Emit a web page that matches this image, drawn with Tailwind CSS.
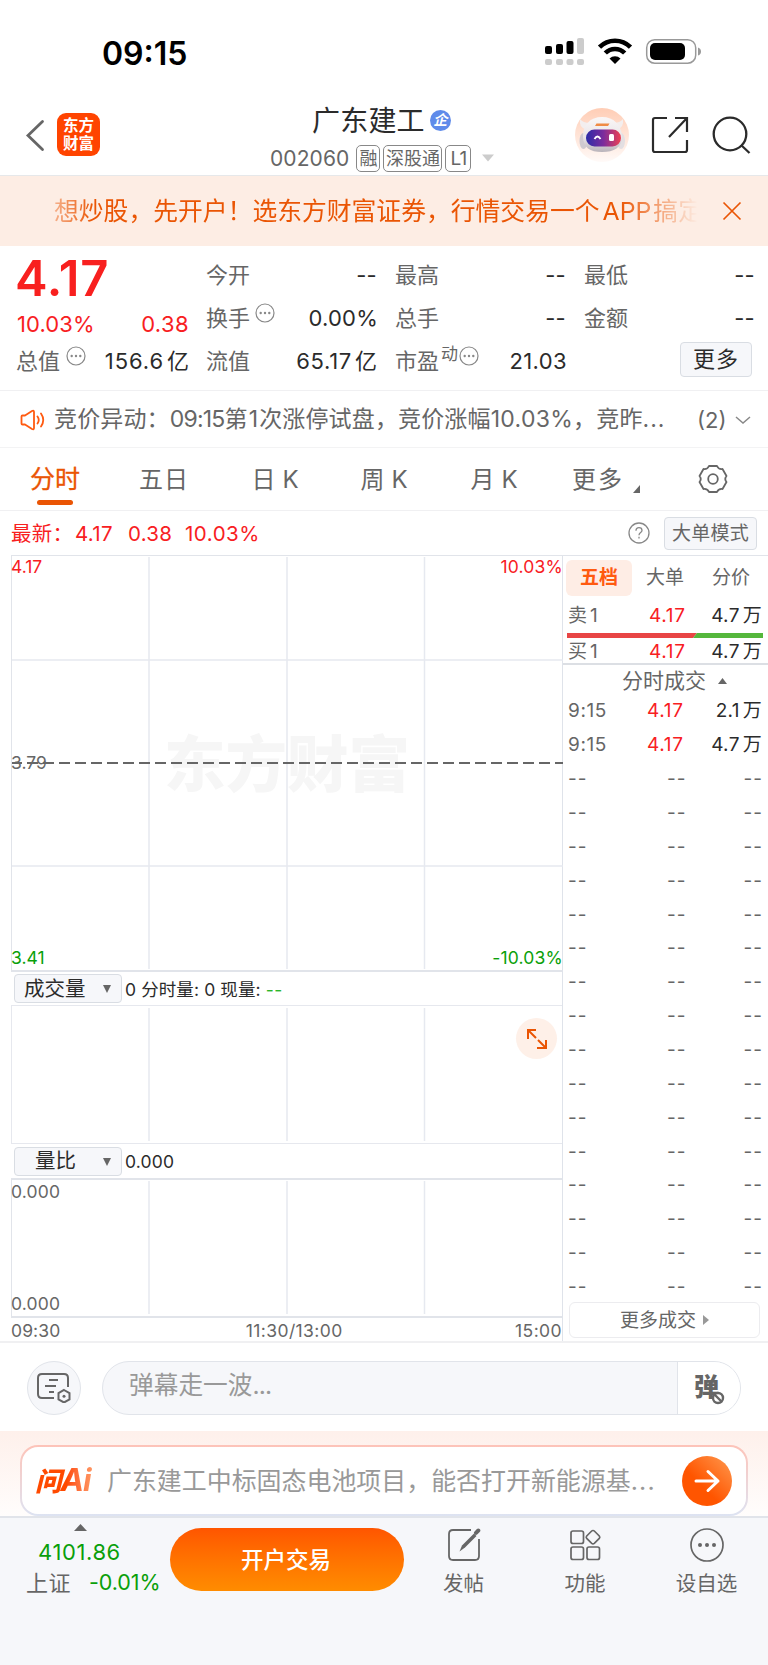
<!DOCTYPE html>
<html lang="zh-CN">
<head>
    <meta charset="UTF-8">
    <meta name="viewport" content="width=device-width, initial-scale=1.0">
    <title>广东建工 002060</title>
    <script src="https://cdn.jsdelivr.net/npm/@tailwindcss/browser@4"></script>
</head>
<body class="w-[768px] h-[1665px] overflow-hidden bg-white text-[#666] font-['Inter','Noto_Sans_CJK_SC',sans-serif] leading-none whitespace-nowrap">

    <!-- Status bar -->
    <div class="h-[98px] flex items-start justify-between pl-[102px] pr-[67px] pt-[37px] text-black">
        <span class="text-[32px] leading-[33px] font-semibold tracking-[0px]">09:15</span>
        <div class="flex items-start">
            <svg class="w-10 h-7 mr-3 ml-[1px]" viewBox="0 0 40 28">
                <g fill="#000"><rect x="0" y="9" width="7" height="8" rx="2"/><rect x="11" y="7" width="7" height="10" rx="2"/><rect x="21.500" y="4" width="7" height="13" rx="2"/></g>
                <g fill="#ccc"><rect x="32" y="1" width="7" height="16" rx="2"/><rect x="0" y="22" width="7" height="6" rx="2"/><rect x="11" y="22" width="7" height="6" rx="2"/><rect x="21.500" y="22" width="7" height="6" rx="2"/><rect x="32" y="22" width="7" height="6" rx="2"/></g>
            </svg>
            <svg class="w-[36px] h-7 mr-3" viewBox="0 0 36 28" fill="none" stroke="#000" stroke-width="4.600">
                <path d="M2.500 10.200a22 22 0 0 1 31 0"/>
                <path d="M8.300 16a13.700 13.700 0 0 1 19.400 0"/>
                <path d="M12.500 21.500a7.800 7.800 0 0 1 11 0L18 27z" fill="#000" stroke="none"/>
            </svg>
            <svg class="w-[56px] h-7" viewBox="0 0 56 28">
                <rect x="1.700" y="2.700" width="49" height="23.500" rx="8" fill="none" stroke="#999" stroke-width="1.500"/>
                <rect x="5" y="6" width="35" height="17" rx="5" fill="#000"/>
                <path d="M53 10.500q3 1 3 4t-3 4z" fill="#999"/>
            </svg>
        </div>
    </div>

    <!-- Header -->
    <header class="h-[78px] flex justify-between border-b border-[#e6e8ea] pl-[24px] pr-[17px]">
        <div class="flex items-start pt-[15px] w-[246px]">
            <svg class="w-[21px] h-[34px] mt-[5px]" viewBox="0 0 21 34" fill="none" stroke="#666" stroke-width="2.800"><path d="M18.500 3.500L4 17.500l14.500 14" stroke-linecap="round"/></svg>
            <div class="ml-[12px] w-[43px] h-[43px] rounded-[9px] bg-[#ff4400] text-white text-[15.500px] leading-[17.500px] font-bold text-center pt-[4px]">东方<br>财富</div>
        </div>
        <div class="flex-1 pt-[7px]">
            <div class="flex items-center h-[32px] pl-[42px]">
                <span class="text-[28px] text-[#2b2b2b] tracking-[0.200px]">广东建工</span>
                <span class="ml-[5px] mt-[-2px] w-[21px] h-[21px] rounded-full bg-[#5f8bea] text-white text-[14px] leading-[20px] font-bold text-center italic">企</span>
            </div>
            <div class="flex items-center h-[32px] mt-[5px] text-[18px] gap-[3px]">
                <span class="text-[21px] mr-[4px] tracking-[0.100px]">002060</span>
                <span class="border-[1.500px] border-[#888] rounded-[5px] h-[27px] leading-[25px] w-[24px] flex justify-center">融</span>
                <span class="border-[1.500px] border-[#888] rounded-[5px] h-[27px] leading-[25px] w-[59px] flex justify-center">深股通</span>
                <span class="border-[1.500px] border-[#888] rounded-[5px] h-[27px] leading-[25px] w-[26px] flex justify-center text-[19px] tracking-[-1px]">L1</span>
                <svg class="w-3 h-2 ml-[8px]" viewBox="0 0 12 8"><path d="M0 .5h12L6 7.500z" fill="#ccc"/></svg>
            </div>
        </div>
        <div class="flex items-start pt-[9px]">
            <svg class="w-[56px] h-[56px] mr-[21px]" viewBox="0 0 56 56">
                <defs>
                    <linearGradient id="halo" x1="0" y1="0" x2="0" y2="1"><stop offset="0" stop-color="#ffcdb5"/><stop offset="1" stop-color="#fffaf8"/></linearGradient>
                    <linearGradient id="visor" x1="0" y1="0" x2="1" y2="0"><stop offset="0" stop-color="#2c2ca8"/><stop offset=".5" stop-color="#7c2c9c"/><stop offset="1" stop-color="#ee4052"/></linearGradient>
                    <linearGradient id="shell" x1="0" y1="0" x2="0" y2="1"><stop offset="0" stop-color="#faf7f7"/><stop offset=".6" stop-color="#e9e4e7"/><stop offset="1" stop-color="#b9b3ba"/></linearGradient>
                </defs>
                <circle cx="28" cy="28" r="27" fill="url(#halo)"/>
                <path d="M6 12q-1 8 5 10l5-6q-7 0-10-4zM49 12q1 8-5 10l-5-6q7 0 10-4z" fill="#f3eeee"/>
                <ellipse cx="9.500" cy="34" rx="4" ry="8" fill="#cfcad0"/><ellipse cx="47" cy="34" rx="4" ry="8" fill="#e3dfe2"/>
                <path d="M28 10c12 0 19 8 20 19 0 12-8 16-20 16S9 41 9 29c0-11 7-19 19-19z" fill="url(#shell)"/>
                <rect x="12" y="22.500" width="35" height="17" rx="8.500" fill="url(#visor)"/>
                <path d="M21 19l1.500-2.500h13L34 19z" fill="#f08b45"/>
                <path d="M20.500 32q3-5 6 0" fill="none" stroke="#fff" stroke-width="1.800"/>
                <rect x="35" y="27" width="5" height="7" rx="1.500" fill="#fff"/>
            </svg>
            <svg class="w-[38px] h-[38px] mr-[22px] mt-[9px]" viewBox="0 0 38 38" fill="none" stroke="#2b2b2b" stroke-width="2.200">
                <path d="M16 2H4Q2 2 2 4v30q0 2 2 2h30q2 0 2-2V24M24 2h12v14M36 2L18 21"/>
            </svg>
            <svg class="w-[40px] h-[40px] mt-[8px]" viewBox="0 0 40 40" fill="none" stroke="#2b2b2b" stroke-width="2.300"><circle cx="19" cy="19" r="16.300"/><path d="M30 30l8.500 8"/></svg>
        </div>
    </header>

    <!-- Account banner -->
    <div class="h-[70px] flex items-center bg-[#fdede4] text-[#ea5504] pl-[54px]">
        <div class="w-[650px] overflow-hidden text-[24.800px] leading-[40px] [mask-image:linear-gradient(to_right,#0006,#000_6%,#000_87%,transparent_99%)]">想炒股，先开户！选东方财富证券，行情交易一个<span class="ml-[3px] mr-[2px]">APP</span>搞定</div>
        <svg class="w-[20px] h-[20px] ml-[18px]" viewBox="0 0 20 20" stroke="#ea5504" stroke-width="1.700"><path d="M1.500 1.500l17 17M18.500 1.500l-17 17"/></svg>
    </div>

    <!-- Quote -->
    <section class="h-[145px] border-b border-[#f0f0f2] flex pt-[8px] pl-[17px] text-[22px] [&_b]:font-normal [&_b]:text-[#2b2b2b]">
        <div class="w-[172px] mr-[17px]">
            <div class="h-[51px] flex items-center text-[49px] font-semibold text-[#f8201f] tracking-[0.800px] -ml-[2px] -mt-[1px] mb-[1px]">4.17</div>
            <div class="h-[38px] flex items-center justify-between text-[#f8201f]"><span class="tracking-[0.100px]">10.03%</span><span class="tracking-[0.400px]">0.38</span></div>
            <div class="h-[36px] flex items-center justify-between">
                <span class="flex -ml-[1px]">总值<svg class="w-5 h-5 ml-[6px] -mt-[4px]" viewBox="0 0 20 20"><use href="#more"/></svg></span>
                <b class="tracking-[0.900px]">156.6<span class="ml-[3px] tracking-normal">亿</span></b>
            </div>
        </div>
        <div class="w-[171px] mr-[18px] -mt-[1px]">
            <div class="h-[43px] flex items-center justify-between"><span>今开</span><b class="tracking-[0.300px]">--</b></div>
            <div class="h-[43px] flex items-center justify-between">
                <span class="flex">换手<svg class="w-5 h-5 ml-[5px] -mt-[4px]" viewBox="0 0 20 20"><use href="#more"/></svg></span>
                <b class="-mr-[1px] tracking-[0.200px]">0.00%</b>
            </div>
            <div class="h-[43px] flex items-center justify-between"><span>流值</span><b class="tracking-[0.700px]">65.17<span class="ml-[3px] tracking-normal">亿</span></b></div>
        </div>
        <div class="w-[171px] mr-[19px] -mt-[1px]">
            <div class="h-[43px] flex items-center justify-between"><span>最高</span><b class="tracking-[0.300px]">--</b></div>
            <div class="h-[43px] flex items-center justify-between"><span>总手</span><b class="tracking-[0.300px]">--</b></div>
            <div class="h-[43px] flex items-center justify-between">
                <span class="flex">市盈<span class="text-[17px] -mt-[4px] ml-[2px]">动</span><svg class="w-5 h-5 ml-[1px] -mt-[4px]" viewBox="0 0 20 20"><use href="#more"/></svg></span>
                <b class="-mr-[1px] tracking-[0.400px]">21.03</b>
            </div>
        </div>
        <div class="w-[171px] -ml-[1px] -mt-[1px]">
            <div class="h-[43px] flex items-center justify-between"><span>最低</span><b class="tracking-[0.300px]">--</b></div>
            <div class="h-[43px] flex items-center justify-between"><span>金额</span><b class="tracking-[0.300px]">--</b></div>
            <div class="h-[43px] flex items-center justify-end pr-[3px]"><span class="w-[72px] h-[35px] mt-[-3px] border border-[#d9dde3] rounded-[4px] bg-[#f6f7fa] text-[#2b2b2b] flex items-center justify-center tracking-[1px]">更多</span></div>
        </div>
    </section>

    <!-- Auction notice -->
    <div class="h-[57px] border-b border-[#f3f3f4] flex items-center text-[23px] pl-[20px] pt-[1px]">
        <svg class="w-[25px] h-[22px] mr-[9px]" viewBox="0 0 25 22" fill="none" stroke="#ff5a10" stroke-width="1.800" stroke-linejoin="round" stroke-linecap="round"><path d="M1.500 7.500q0-1 1-1H5L12 2q2-1 2 1v16q0 2-2 1l-7-4.500H2.500q-1 0-1-1z"/><path d="M17.500 7.500q2.500 3.500 0 7M21 4.500q4.500 6.500 0 13"/></svg>
        <span class="w-[612px] tracking-[0.150px]">竞价异动：<span class="tracking-[-0.800px]">09:15</span>第<span class="mx-[1px]">1</span>次涨停试盘，竞价涨幅<span class="tracking-[0.300px]">10.03%</span>，竞昨<span class="tracking-[1px]">...</span></span>
        <span class="ml-[31px] text-[22px]">(2)</span>
        <svg class="w-4 h-2 ml-[9px]" viewBox="0 0 16 8" fill="none" stroke="#888" stroke-width="1.500"><path d="M1 1l7 6 7-6"/></svg>
    </div>

    <!-- Period tabs -->
    <nav class="h-[63px] border-b border-[#f0f0f2] flex text-[24px] leading-[63px] [&>span]:w-[110px] [&>span]:text-center">
        <span class="flex flex-col items-center text-[#ea5504] text-[25px] [-webkit-text-stroke:0.300px]">分时<i class="block w-[36px] h-[5px] rounded-full bg-[#ea5504] -mt-[11px]"></i></span>
        <span class="tracking-[1px] -ml-[1px] mr-[1px]">五日</span>
        <span>日<span class="ml-[7px]">K</span></span>
        <span class="-ml-[1px]">周<span class="ml-[7px]">K</span></span>
        <span>月<span class="ml-[7px]">K</span></span>
        <span class="flex justify-center pl-[4px] tracking-[2px]">更多<svg class="w-[7px] h-[8px] mt-[37px] ml-[9px]" viewBox="0 0 7 8"><path d="M7 0v8H0z" fill="#666"/></svg></span>
        <svg class="w-[30px] h-[30px] mt-[16px] ml-[39px]" viewBox="0 0 30 30" fill="none" stroke="#666" stroke-width="1.800" stroke-linejoin="round"><path d="M11 2h8q1.500 3.500 5.500 3l4 7q-2.500 3 0 6l-4 7q-4-.5-5.500 3h-8q-1.500-3.500-5.500-3l-4-7q2.500-3 0-6l4-7q4 .5 5.500-3z"/><circle cx="15" cy="15" r="4.800"/></svg>
    </nav>

    <!-- Latest price line -->
    <div class="h-[44px] flex items-center text-[20.500px] pl-[11px] pr-[11px]">
        <div class="flex items-center text-[#f8201f] flex-1 tracking-[0.300px] pt-[2px]"><span class="w-[64px]">最新：</span><span class="w-[53px]">4.17</span><span class="w-[57px]">0.38</span><span class="tracking-[0.500px]">10.03%</span></div>
        <svg class="w-[22px] h-[22px] mr-[14px]" viewBox="0 0 22 22" fill="none" stroke="#888" stroke-width="1.300"><circle cx="11" cy="11" r="10"/><path d="M8 8.700q0-3 3-3t3 2.800c0 2-3 2.200-3 4.700M11 14.800v1.800"/></svg>
        <span class="w-[93px] h-[33px] border border-[#d9dde3] rounded-[4px] bg-[#f6f7fa] flex items-center justify-center text-[19px] tracking-[0.200px]">大单模式</span>
    </div>

    <div class="h-[788px] flex border-b-2 border-[#f0f0f2]">
        <!-- Charts -->
        <div class="w-[552px] ml-[11px] border-r border-[#dfe3ea] text-[17.500px]">
            <div class="relative h-[417px] border-l border-b-2 border-[#e1e4ea]">
                <div class="absolute left-[152px] top-[177px] text-[61.500px] leading-[66px] font-black text-[#f6f6f6]">东方财富</div>
                <svg class="absolute inset-0 w-[551px] h-[416px]" viewBox="0 0 551 416" fill="none">
                    <path d="M0 .5h551" stroke="#e1e4ea"/>
                    <path d="M0 105h551M0 311h551" stroke="#e6e9f0" stroke-width="1.500"/>
                    <path d="M137 2v412M275 2v412M412.500 2v412" stroke="#e6e9f0" stroke-width="1.500"/>
                    <path d="M0 208h551" stroke="#666" stroke-width="2" stroke-dasharray="11 5" stroke-dashoffset="1"/>
                </svg>
                <span class="absolute -left-px top-[3px] text-[#f8201f]">4.17</span>
                <span class="absolute -right-px top-[3px] text-[#f8201f] tracking-[0.200px]">10.03%</span>
                <span class="absolute -left-px top-[199px]">3.79</span>
                <span class="absolute -left-px bottom-[4px] text-[#0a9f0a]">3.41</span>
                <span class="absolute -right-px bottom-[4px] text-[#0a9f0a] tracking-[0.200px]">-10.03%</span>
            </div>
            <div class="h-[33px] flex items-center pl-[3px] text-[#2b2b2b]">
                <div class="w-[108px] h-[29px] border border-[#d9dde3] rounded-[4px] bg-[#f6f7fa] flex items-center text-[20.500px] pl-[9px] pt-[1px]"><span class="w-[79px]">成交量</span><svg class="w-2 h-2" viewBox="0 0 8 8"><path d="M0 0h8L4 8z" fill="#666"/></svg></div>
                <span class="ml-[3px] pt-[2px] tracking-[0.100px]">0 分时量: 0 现量: <span class="text-[#2bb52b] tracking-[0.500px]">--</span></span>
            </div>
            <div class="relative h-[139px] border-l border-y border-[#e6e8ee]">
                <svg class="w-[551px] h-[137px]" viewBox="0 0 551 137"><path d="M137 2v133M275 2v133M412.500 2v133" stroke="#e6e9f0" stroke-width="1.500"/></svg>
                <div class="absolute right-[5px] top-[12px] w-[41px] h-[41px] rounded-full bg-[#fef0e8] flex items-center justify-center">
                    <svg class="w-[22px] h-[22px]" viewBox="0 0 22 22" fill="none" stroke="#ea5504" stroke-width="2"><path d="M10 2H2v9M2 2l8 8M20 12v8h-9M20 20l-8-8"/></svg>
                </div>
            </div>
            <div class="h-[34px] flex items-center pl-[3px] text-[#2b2b2b]">
                <div class="w-[108px] h-[29px] border border-[#d9dde3] rounded-[4px] bg-[#f6f7fa] flex items-center text-[20.500px] pl-[20px] pt-[1px]"><span class="w-[68px]">量比</span><svg class="w-2 h-2" viewBox="0 0 8 8"><path d="M0 0h8L4 8z" fill="#666"/></svg></div>
                <span class="ml-[3px] pt-[1px] tracking-[0.200px]">0.000</span>
            </div>
            <div class="relative h-[140px] border-l border-y-2 border-[#e1e4ea] tracking-[0.200px]">
                <svg class="w-[551px] h-[136px]" viewBox="0 0 551 136"><path d="M137 1v133M275 1v133M412.500 1v133" stroke="#e6e9f0" stroke-width="1.500"/></svg>
                <span class="absolute -left-px top-[3px]">0.000</span>
                <span class="absolute -left-px bottom-[4px]">0.000</span>
            </div>
            <div class="h-[23px] flex items-center justify-between pt-[3px] tracking-[0.400px]"><span class="tracking-[0.100px]">09:30</span><span class="pl-[13px]">11:30/13:00</span><span>15:00</span></div>
        </div>

        <!-- Order book -->
        <aside class="w-[205px] border-t border-[#e1e4ea] text-[19px]">
            <div class="flex pt-[4px] pl-[3px] leading-[36px] text-center">
                <span class="w-[66px] h-[36px] rounded-[6px] bg-[#feede5] text-[#ff5a10] font-bold">五档</span>
                <span class="w-[66px]">大单</span>
                <span class="w-[66px]">分价</span>
            </div>
            <div class="h-[37px] flex items-center pl-[5px] pt-[2px]"><span class="w-[81px]">卖<span class="ml-[3px]">1</span></span><span class="text-[#f8201f] tracking-[0.700px]">4.17</span><span class="flex-1 text-right pr-[6px] text-[#2b2b2b] tracking-[0.300px]">4.7<span class="ml-[3px]">万</span></span></div>
            <svg class="w-[196px] h-[5px] ml-[4px]" viewBox="0 0 196 5"><path d="M0 0h130l-4 5H0z" fill="#e84545"/><path d="M130 0h66v5h-70z" fill="#55b73c"/></svg>
            <div class="h-[27px] flex items-center pl-[5px] pt-[2px] border-b-2 border-[#dcdfe4]"><span class="w-[81px]">买<span class="ml-[3px]">1</span></span><span class="text-[#f8201f] tracking-[0.700px]">4.17</span><span class="flex-1 text-right pr-[6px] text-[#2b2b2b] tracking-[0.300px]">4.7<span class="ml-[3px]">万</span></span></div>
            <div class="h-[29px] flex items-center pl-[59px] pt-[2px] text-[21px]">分时成交<svg class="w-[9px] h-[6px] ml-[12px]" viewBox="0 0 9 6"><path d="M0 6h9L4.500 0z" fill="#666"/></svg></div>
            <div id="deals"></div>
            <div class="mt-[-1px] ml-[6px] w-[191px] h-[36px] border border-[#ececef] rounded-[6px] flex items-center justify-center">更多成交<svg class="w-[6px] h-[10px] ml-[7px]" viewBox="0 0 6 10"><path d="M0 0v10l6-5z" fill="#999"/></svg></div>
        </aside>
    </div>

    <!-- Bullet comments -->
    <div class="h-[88px] flex pt-[18px] pl-[27px]">
        <div class="w-[54px] h-[54px] rounded-full border border-[#e1e4ea] bg-[#f6f7fa] flex items-center justify-center">
            <svg class="w-[34px] h-[30px]" viewBox="0 0 34 30" fill="none" stroke="#666" stroke-width="2"><path d="M31 14V5q0-4-4-4H5Q1 1 1 5v16q0 4 4 4h12"/><path d="M12 7h9M8 13h11M12 19h5" /><path d="M27 17l5.500 3.200v6.300L27 29.500l-5.500-3v-6.300z"/><circle cx="27" cy="23.300" r="1.500" fill="#666" stroke="none"/></svg>
        </div>
        <div class="ml-[21px] w-[639px] h-[54px] rounded-full border border-[#e1e4ea] bg-[#f6f7fa] flex overflow-hidden">
            <span class="w-[575px] border-r border-[#e1e4ea] pl-[26px] text-[24.700px] leading-[47px] text-[#999]">弹幕走一波<span class="tracking-[-0.800px]">...</span></span>
            <span class="relative flex-1 bg-white pl-[16px] text-[25px] leading-[50px] font-black">弹<svg class="absolute left-[33px] top-[29px] w-[14px] h-[14px]" viewBox="0 0 14 14" fill="#fff" stroke="#666" stroke-width="2.400"><circle cx="7" cy="7" r="5"/><path d="M3.500 3.500l7 7"/></svg></span>
        </div>
    </div>

    <!-- AI question -->
    <div class="h-[85px] pt-[14px] pl-[20px] bg-linear-to-b from-[#fef0eb] to-[#fffdfc]">
        <div class="w-[728px] h-[71px] rounded-[18px] p-[2px] bg-linear-to-b from-[#fdc3b8] to-[#dde3f2]">
            <div class="h-full rounded-[16px] bg-white flex items-center pl-[12px]">
                <span class="w-[60px] pl-[1px] flex items-baseline font-black italic text-[26.500px] tracking-[-1px] text-transparent bg-clip-text bg-linear-to-r from-[#ff4a00] from-55% to-[#ff9a66] leading-[34px]">问<span class="text-[31.500px] font-bold">Ai</span></span>
                <span class="ml-[13px] w-[561px] text-[24.950px] text-[#999] pt-[2px]">广东建工中标固态电池项目，能否打开新能源基<span class="tracking-[1.200px]">...</span></span>
                <svg class="w-[50px] h-[50px] ml-[14px]" viewBox="0 0 50 50">
                    <defs><linearGradient id="go" x1="0" y1="1" x2="1" y2="0"><stop offset=".4" stop-color="#ff5500"/><stop offset="1" stop-color="#ff9a50"/></linearGradient></defs>
                    <circle cx="25" cy="25" r="25" fill="url(#go)"/>
                    <path d="M14 25h22M26 15.500l10 9.500-10 9.500" fill="none" stroke="#fff" stroke-width="3" stroke-linecap="round" stroke-linejoin="round"/>
                </svg>
            </div>
        </div>
    </div>

    <!-- Bottom bar -->
    <footer class="h-[149px] border-t-2 border-[#e1e4ea] bg-[#f6f7fa] flex">
        <div class="w-[170px] pt-[6px] text-[22px]">
            <svg class="w-[13px] h-[7px] ml-[74px]" viewBox="0 0 13 7"><path d="M0 7h13L6.500 0z" fill="#666"/></svg>
            <div class="text-[#0a9f0a] pl-[38px] mt-[10px] tracking-[0.600px]">4101.86</div>
            <div class="flex items-center pl-[26px] mt-[9px] tracking-[0.500px]">上证<span class="text-[#0a9f0a] ml-[18px] text-[21.500px] tracking-[-0.100px]">-0.01%</span></div>
        </div>
        <div class="w-[234px] h-[63px] mt-[10px] rounded-full bg-linear-to-b from-[#ff5500] to-[#ff8c00] text-white text-[22.500px] font-medium flex items-center justify-center pt-[1px] pr-[2px]">开户交易</div>
        <div class="flex-1 flex pt-[10px] -ml-[1px] text-[20.500px]">
            <div class="w-[121px] flex flex-col items-center">
                <svg class="w-[34px] h-[34px]" viewBox="0 0 34 34" fill="none" stroke="#666" stroke-width="1.800"><path d="M24 2H6Q2 2 2 6v22q0 4 4 4h22q4 0 4-4V11"/><path d="M12.500 23.500l2.500-6L27 5.500l2.500 2.500L18 19.500z" fill="#666" stroke="none"/><path d="M29 4.800l2.300-2.300" stroke-width="4" stroke-linecap="round"/></svg>
                <span class="mt-[12px]">发帖</span>
            </div>
            <div class="w-[122px] flex flex-col items-center">
                <svg class="w-[34px] h-[34px]" viewBox="0 0 34 34" fill="none" stroke="#666" stroke-width="1.700"><rect x="3" y="3" width="12.500" height="12.500" rx="2"/><rect x="3" y="19" width="12.500" height="12.500" rx="2"/><rect x="19" y="19" width="12.500" height="12.500" rx="2"/><path d="M25 2.500q.8 0 1.300.5l5 5q1 1.200 0 2.400l-5 5q-1.300 1-2.600 0l-5-5q-1-1.200 0-2.400l5-5q.5-.5 1.300-.5z"/></svg>
                <span class="mt-[12px]">功能</span>
            </div>
            <div class="w-[121px] flex flex-col items-center">
                <svg class="w-[34px] h-[34px]" viewBox="0 0 34 34" fill="none" stroke="#666" stroke-width="1.700"><circle cx="17" cy="17" r="16"/><g fill="#666" stroke="none"><circle cx="10" cy="17" r="2"/><circle cx="17" cy="17" r="2"/><circle cx="24" cy="17" r="2"/></g></svg>
                <span class="mt-[12px]">设自选</span>
            </div>
        </div>
    </footer>

    <svg class="hidden">
        <g id="more"><circle cx="10" cy="10" r="9" fill="none" stroke="#888" stroke-width="1.200"/><circle cx="5.700" cy="10" r="1.200" fill="#888"/><circle cx="10" cy="10" r="1.200" fill="#888"/><circle cx="14.300" cy="10" r="1.200" fill="#888"/></g>
    </svg>

    <script>
    const deals = [['9:15', '4.17', '2.1'], ['9:15', '4.17', '4.7']];
    for (let i = 0; i < 16; i++) deals.push(null);

    document.getElementById('deals').innerHTML = deals.map(d => d
        ? `<div class="h-[33.870px] flex items-center pl-[5px]"><span class="w-[79px] tracking-[0.600px]">${d[0]}</span><span class="text-[#f8201f] tracking-[0.700px]">${d[1]}</span><span class="flex-1 text-right pr-[6px] text-[#2b2b2b] tracking-[0.300px]">${d[2]}<span class="ml-[3px]">万</span></span></div>`
        : `<div class="h-[33.870px] flex items-center pl-[5px] pr-[5px] tracking-[1px]"><span class="w-[99px]">--</span><span>--</span><span class="flex-1 text-right">--</span></div>`
    ).join('');
    </script>
</body>
</html>
